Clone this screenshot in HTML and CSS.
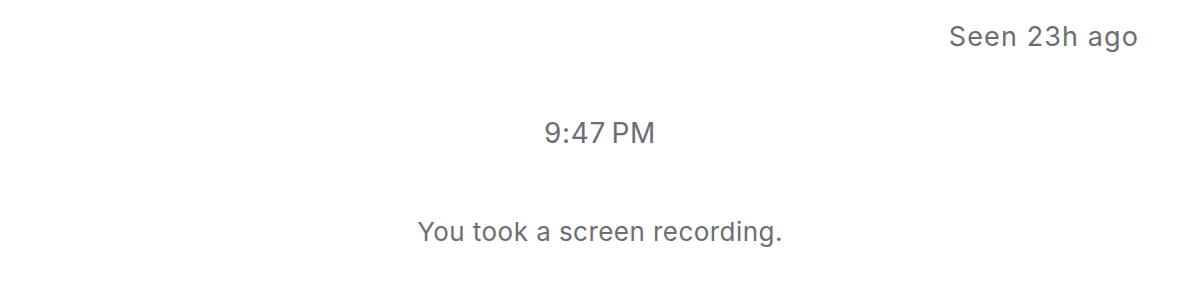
FILE: index.html
```html
<!DOCTYPE html>
<html>
<head>
<meta charset="utf-8">
<link rel="stylesheet" href="styles.css">
</head>
<body>
<div class="thread">
  <div class="seen">Seen 23h ago</div>
  <div class="time">9:47&#8201;PM</div>
  <div class="event">You took a screen recording.</div>
</div>
</body>
</html>
```
FILE: styles.css
```css
html, body {
  margin: 0;
  padding: 0;
  background: #ffffff;
}
.thread {
  width: 1200px;
  height: 300px;
  display: flex;
  flex-direction: column;
  font-family: Inter, "Noto Sans", sans-serif;
  color: #6d6d72;
}
.seen {
  align-self: flex-end;
  margin-right: 61px;
  margin-top: 18px;
  font-size: 27px;
  line-height: 38px;
  letter-spacing: 1.1px;
}
.time {
  align-self: center;
  margin-top: 58px;
  font-size: 28px;
  line-height: 38px;
  letter-spacing: 0.6px;
}
.event {
  align-self: center;
  margin-top: 64px;
  font-size: 26px;
  line-height: 32px;
  letter-spacing: 0.45px;
}
```
